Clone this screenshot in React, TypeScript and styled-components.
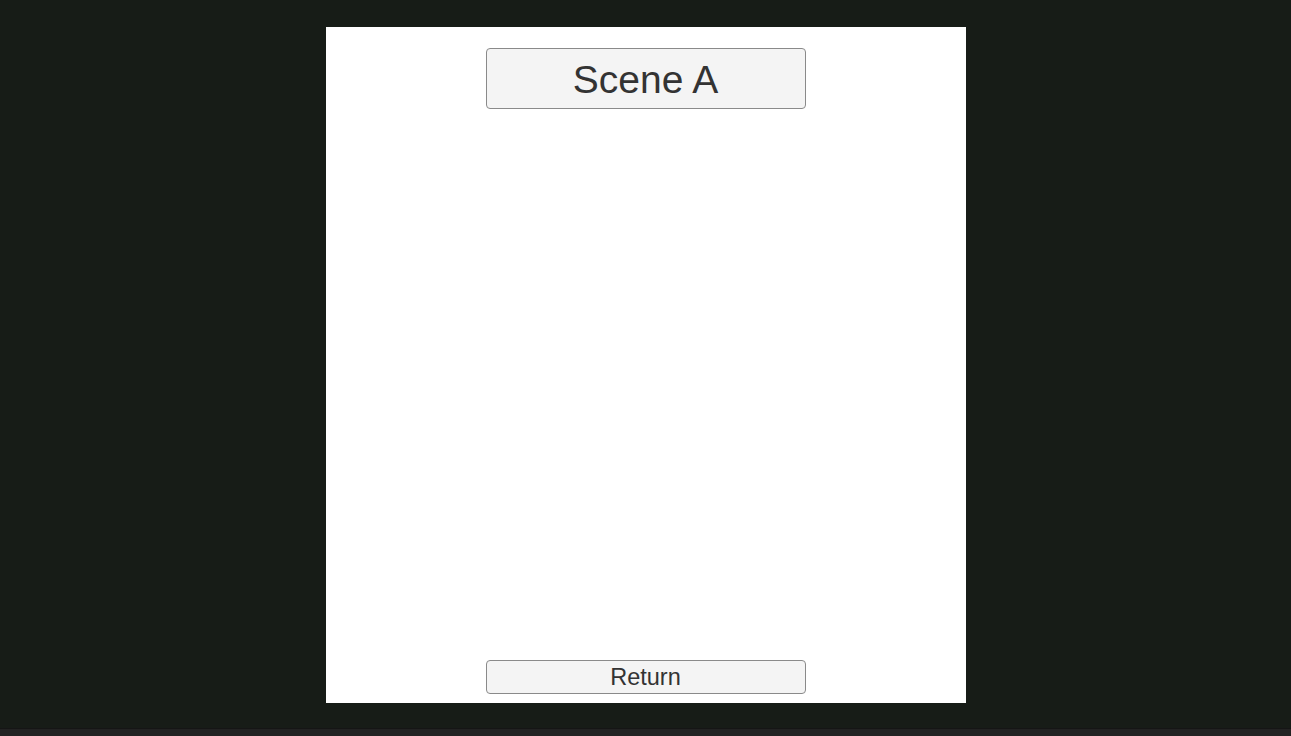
import React from "react";
import styled, { createGlobalStyle } from "styled-components";

const Global = createGlobalStyle`
  html, body { margin: 0; padding: 0; background: #171c17; }
  body { font-family: "Liberation Sans", Arial, sans-serif; }
`;

const Screen = styled.div`
  width: 1291px;
  height: 736px;
  display: flex;
  flex-direction: column;
  background: #171c17;
  overflow: hidden;
`;

const Stage = styled.div`
  flex: 1;
  display: flex;
  justify-content: center;
  padding-top: 27px;
`;

const Panel = styled.div`
  width: 640px;
  height: 676px;
  background: #ffffff;
  display: flex;
  flex-direction: column;
  align-items: center;
  justify-content: space-between;
  padding: 21px 0 9px;
  box-sizing: border-box;
`;

const Button = styled.button<{ $big?: boolean }>`
  width: 320px;
  height: ${(p) => (p.$big ? "61px" : "34px")};
  box-sizing: border-box;
  background: #f4f4f4;
  border: 1px solid #8a8a8a;
  border-radius: 4px;
  color: #333333;
  font-family: "Liberation Sans", Arial, sans-serif;
  font-size: ${(p) => (p.$big ? "39px" : "23.5px")};
  line-height: 1;
  padding: ${(p) => (p.$big ? "2px 0 0" : "2px 0 0")};
  display: flex;
  align-items: center;
  justify-content: center;
`;

const BottomBar = styled.div`
  height: 7px;
  background: #222222;
  border-top: 1px solid #151515;
`;

export default function App() {
  return (
    <>
      <Global />
      <Screen>
        <Stage>
          <Panel>
            <Button $big>Scene A</Button>
            <Button>Return</Button>
          </Panel>
        </Stage>
        <BottomBar />
      </Screen>
    </>
  );
}
